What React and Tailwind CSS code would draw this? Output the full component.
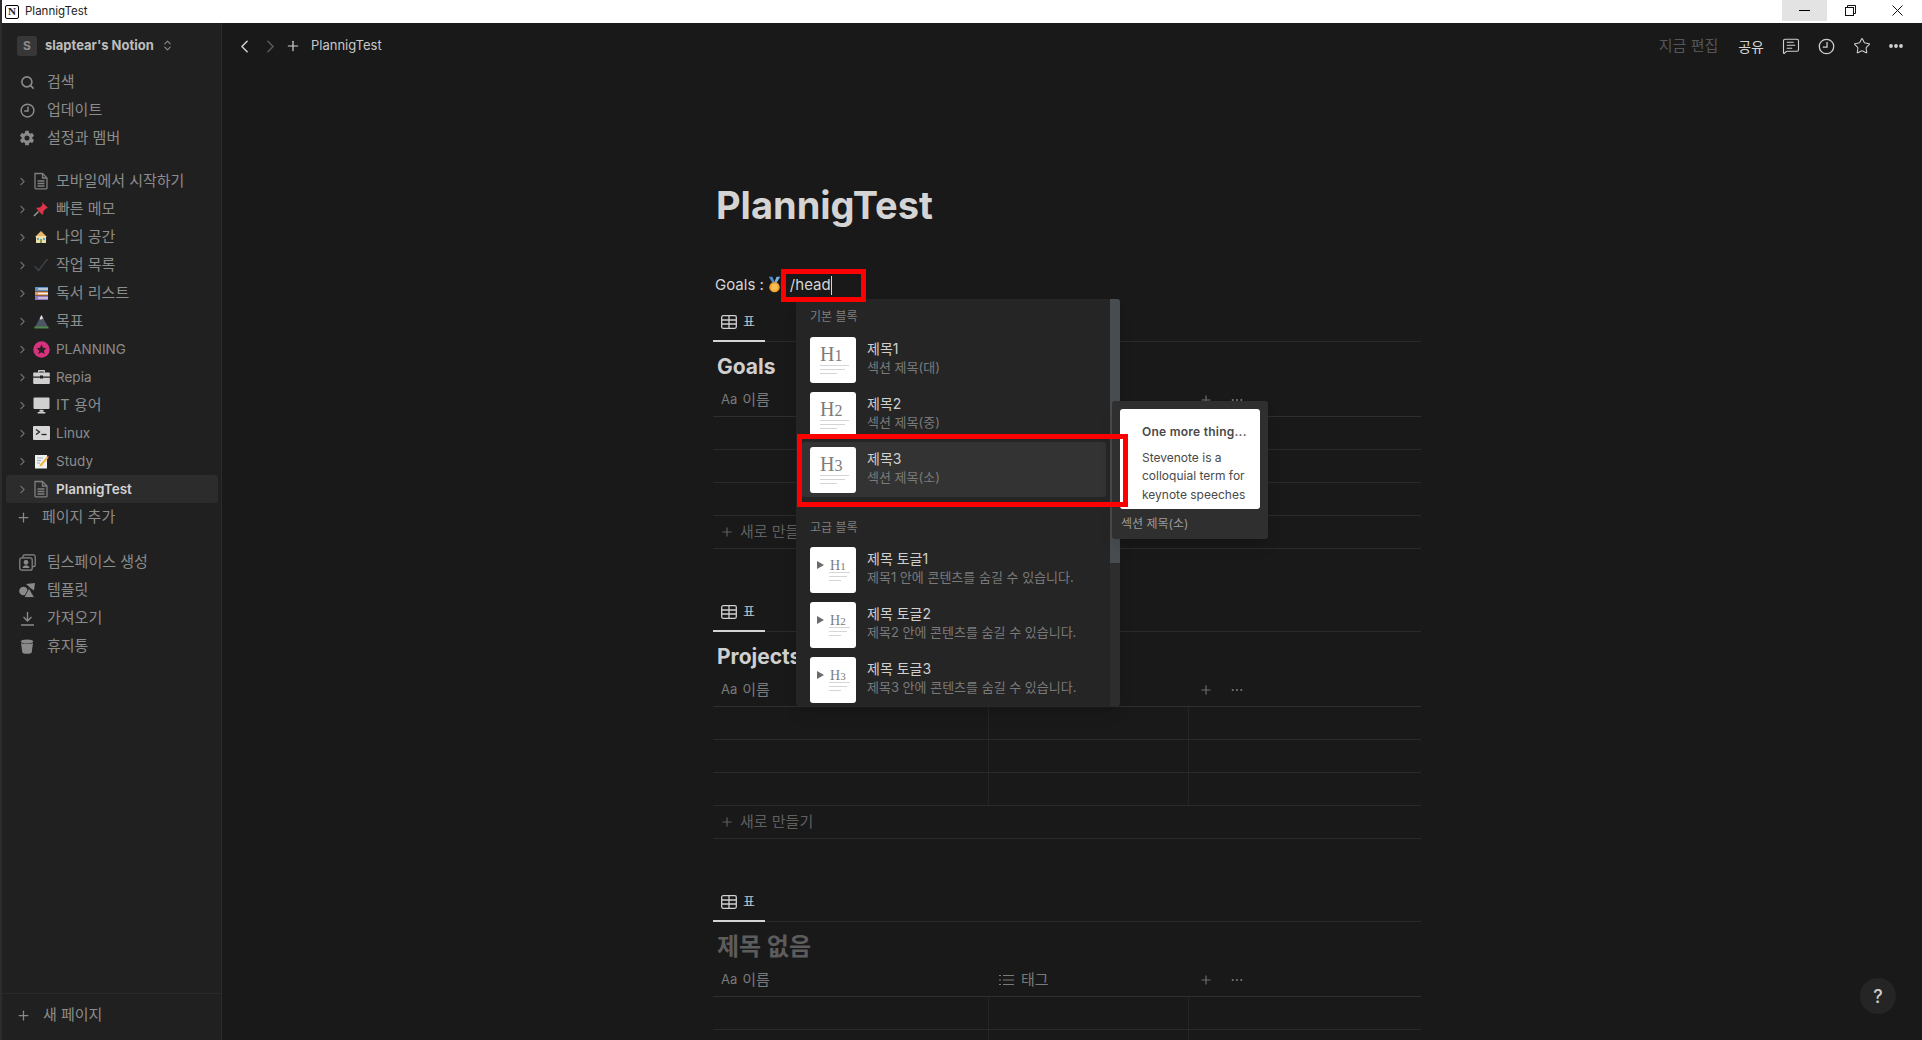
import React from "react";
import { ChevronRight, ChevronLeft, Plus, Search, ChevronsUpDown, Star, MessageSquareText } from "lucide-react";
import { IoSettingsSharp } from "react-icons/io5";

const font = { fontFamily: 'Inter, "Noto Sans CJK KR", sans-serif' };
const isKo = (s) => /[가-힣]/.test(s);

const Doc = () => (
  <svg width="16" height="18" viewBox="0 0 16 18" fill="none" stroke="#7f7f7f" strokeWidth="1.3">
    <path d="M2 1.500h7.500L14 6v10a.8.8 0 0 1-.8.8H2.800A.8.8 0 0 1 2 16z" />
    <path d="M9.500 1.500V6H14M4.500 9h7M4.500 11.500h7M4.500 14h7" />
  </svg>
);
const Pin = () => (
  <svg width="16" height="16" viewBox="0 0 16 16">
    <path d="M9 1l6 6-2 .6-2.600 2.600-.2 2.800-1 .8L3.400 7.600l.9-1 2.800-.2L9.600 3.800z" fill="#e0344a" />
    <path d="M5.500 10.500L1 15" stroke="#9a9a9a" strokeWidth="1.400" />
  </svg>
);
const House = () => (
  <svg width="14" height="14" viewBox="0 0 14 14">
    <path d="M7 1l6 6H1z" fill="#e8b667" />
    <rect x="2" y="6" width="10" height="7" fill="#f0dca8" />
    <rect x="6" y="9" width="2" height="4" fill="#7aa35c" />
    <rect x="3" y="8" width="2" height="2" fill="#6aa6c8" />
    <rect x="9" y="8" width="2" height="2" fill="#6aa6c8" />
  </svg>
);
const Check = () => (
  <svg width="16" height="16" viewBox="0 0 16 16" fill="none">
    <path d="M1.500 9l4 4.500L14.500 2" stroke="#3b4045" strokeWidth="1.600" />
  </svg>
);
const Books = () => (
  <svg width="15" height="15" viewBox="0 0 15 15">
    <rect x="1" y="1" width="13" height="4" fill="#5b8fc4" />
    <rect x="1" y="5.500" width="13" height="4" fill="#e89a5b" />
    <rect x="1" y="10" width="13" height="4" fill="#9577c4" />
    <rect x="4" y="2.300" width="10" height="1.400" fill="#dcdcdc" />
    <rect x="4" y="6.800" width="10" height="1.400" fill="#eee" />
    <rect x="4" y="11.300" width="10" height="1.400" fill="#dcdcdc" />
  </svg>
);
const Mountain = () => (
  <svg width="15" height="15" viewBox="0 0 15 15">
    <path d="M7.500 1L14 13H1z" fill="#4b5563" />
    <path d="M7.500 1L9.500 5 8 4.500 7 6 5.600 4.600z" fill="#dfe4e8" />
    <rect x="0.500" y="12.500" width="14" height="2" fill="#4f8a4a" />
  </svg>
);
const StarCircle = () => (
  <svg width="17" height="17" viewBox="0 0 17 17">
    <circle cx="8.500" cy="8.500" r="8.200" fill="#d6337e" />
    <path d="M8.500 3.600l1.500 3.200 3.400.4-2.500 2.400.7 3.400-3.100-1.700-3.100 1.700.7-3.400L3.600 7.200 7 6.800z" fill="#2a2024" />
  </svg>
);
const Briefcase = () => (
  <svg width="17" height="16" viewBox="0 0 17 16" fill="#d0d0d0">
    <path d="M6 1h5a1 1 0 0 1 1 1v1.500h-1.300V2.400H6.300v1.100H5V2a1 1 0 0 1 1-1z" />
    <path d="M1 3.500h15a.8.8 0 0 1 .8.8v3.200H.2V4.300a.8.8 0 0 1 .8-.8zM.2 8.800h16.600V14a1 1 0 0 1-1 1H1.200a1 1 0 0 1-1-1z" />
    <rect x="7" y="6.500" width="3" height="3" fill="#222" />
  </svg>
);
const Monitor = () => (
  <svg width="17" height="17" viewBox="0 0 17 17" fill="#d0d0d0">
    <rect x="0.500" y="0.500" width="16" height="11.500" rx="1" />
    <rect x="6.500" y="12.800" width="4" height="2" />
    <rect x="4.500" y="15" width="8" height="1.500" rx=".7" />
  </svg>
);
const Terminal = () => (
  <svg width="17" height="14" viewBox="0 0 17 14">
    <rect width="17" height="14" rx="1" fill="#d6d6d6" />
    <path d="M3 3.500L6.500 6 3 8.500" stroke="#222" strokeWidth="1.300" fill="none" />
    <path d="M8.500 8.500h5" stroke="#222" strokeWidth="1.300" />
  </svg>
);
const Memo = () => (
  <svg width="15" height="15" viewBox="0 0 15 15">
    <rect x="1" y="1" width="12" height="13.500" fill="#eef0f2" />
    <path d="M3 4h6M3 6.500h4M3 9h3" stroke="#8a9aa8" strokeWidth=".8" />
    <path d="M6 10.500L13 2.500l1.500 1.300L7.500 12l-2 .6z" fill="#f0b53c" />
    <path d="M13 2.500l.9-1 1 1-.9 1.300z" fill="#e0526a" />
  </svg>
);
const Medal = () => (
  <svg width="13" height="18" viewBox="0 0 15 19">
    <path d="M1 0h4l3 7H5z" fill="#4f8ec9" />
    <path d="M14 0h-4L7 7h3z" fill="#7fb2de" />
    <circle cx="7.500" cy="12" r="6" fill="#f0a32c" />
    <circle cx="7.500" cy="12" r="3.800" fill="#f7bd55" />
  </svg>
);

const ClockIcon = ({ size = 16, color = "#8a8a8a", sw = 1.600 }) => (
  <svg width={size} height={size} viewBox="0 0 16 16" fill="none" stroke={color} strokeWidth={sw}>
    <circle cx="8" cy="8" r="6.800" />
    <path d="M8.500 3.800V8.500H4.500" />
  </svg>
);
const Team = () => (
  <svg width="17" height="17" viewBox="0 0 17 17" fill="none" stroke="#8a8a8a" strokeWidth="1.200">
    <rect x="0.800" y="3.800" width="12.400" height="12.400" rx="2" />
    <path d="M4 3.500V2.500a1.700 1.700 0 0 1 1.700-1.700h9a1.700 1.700 0 0 1 1.500 1.700v8.500a1.700 1.700 0 0 1-1.700 1.700h-1" />
    <circle cx="7" cy="8.300" r="1.800" fill="#8a8a8a" />
    <path d="M3.500 14c.4-2 1.800-2.800 3.500-2.800s3.100.8 3.500 2.800z" fill="#8a8a8a" stroke="none" />
  </svg>
);
const Shapes = () => (
  <svg width="17" height="15" viewBox="0 0 17 15" fill="#8a8a8a">
    <circle cx="4.500" cy="8" r="4.300" />
    <path d="M7 1l9-1-1 7.500-3-2z" />
    <path d="M10 5l5.500 9.500H5z" stroke="#202020" strokeWidth=".8" />
  </svg>
);
const Import = () => (
  <svg width="15" height="15" viewBox="0 0 15 15" fill="none" stroke="#8a8a8a" strokeWidth="1.400">
    <path d="M7.500 1v8.500M3.500 6l4 4 4-4M1 14h13" />
  </svg>
);
const Trash = () => (
  <svg width="14" height="15" viewBox="0 0 14 15" fill="#8a8a8a">
    <path d="M1 4c1.500 1.200 10.500 1.200 12 0l-1.300 9.400c-.3 1.800-9.100 1.800-9.400 0z" />
    <ellipse cx="7" cy="2.500" rx="6.300" ry="2" />
  </svg>
);
const TableIcon = () => (
  <svg width="16" height="14" viewBox="0 0 16 14" fill="none" stroke="#d0d0d0" strokeWidth="1.300">
    <rect x="0.700" y="0.700" width="14.600" height="12.600" rx="1.500" />
    <path d="M0.700 5h14.600M0.700 9h14.600M8 .7v12.600" />
  </svg>
);
const Dots = ({ r = 1.400, color = "#7a7a7a", w = 14 }) => (
  <svg width={w} height="4" viewBox="0 0 14 4" fill={color}>
    <circle cx="2" cy="2" r={r} />
    <circle cx="7" cy="2" r={r} />
    <circle cx="12" cy="2" r={r} />
  </svg>
);

const Row = ({ icon, label }) => (
  <div className="flex h-[28px] items-center text-[15px] text-[#8c8c8c]">
    <span className="flex w-[20px] ml-[15px] justify-center">{icon}</span>
    <span className="ml-[10px]">{label}</span>
  </div>
);
const TreeRow = ({ icon, label, active }) => (
  <div className={`flex h-[28px] items-center mr-[3px] ml-[4px] rounded-[3px] ${isKo(label) ? "text-[15px]" : "text-[13.5px]"} ${active ? "bg-[#2c2c2c] text-[#d4d4d4] font-semibold" : "text-[#8c8c8c]"}`}>
    <ChevronRight size={13} color="#6e6e6e" className="ml-[10px]" />
    <span className="flex w-[20px] ml-[2px] justify-center">{icon}</span>
    <span className="ml-[5px]">{label}</span>
  </div>
);

const Sidebar = () => (
  <aside className="flex h-full w-[220px] shrink-0 flex-col border-r border-[#2a2a2a] bg-[#202020]">
    <div className="flex h-[45px] shrink-0 items-center pl-[15px] text-[13px] font-bold text-[#bdbdbd]">
      <span className="flex h-[20px] w-[20px] items-center justify-center rounded-[3px] bg-[#373737] text-[12px] text-[#8c8c8c]">S</span>
      <span className="ml-[8px]">slaptear's Notion</span>
      <ChevronsUpDown size={13} color="#8c8c8c" className="ml-[7px]" />
    </div>
    <Row icon={<Search size={15} color="#8a8a8a" strokeWidth={2.600} />} label="검색" />
    <Row icon={<ClockIcon size={15} />} label="업데이트" />
    <Row icon={<IoSettingsSharp size={16} color="#8a8a8a" />} label="설정과 멤버" />
    <div className="mt-[15px]">
      <TreeRow icon={<Doc />} label="모바일에서 시작하기" />
      <TreeRow icon={<Pin />} label="빠른 메모" />
      <TreeRow icon={<House />} label="나의 공간" />
      <TreeRow icon={<Check />} label="작업 목록" />
      <TreeRow icon={<Books />} label="독서 리스트" />
      <TreeRow icon={<Mountain />} label="목표" />
      <TreeRow icon={<StarCircle />} label="PLANNING" />
      <TreeRow icon={<Briefcase />} label="Repia" />
      <TreeRow icon={<Monitor />} label="IT 용어" />
      <TreeRow icon={<Terminal />} label="Linux" />
      <TreeRow icon={<Memo />} label="Study" />
      <TreeRow icon={<Doc />} label="PlannigTest" active />
      <div className="flex h-[28px] items-center pl-[14px] text-[15px] text-[#8c8c8c]">
        <Plus size={15} color="#8a8a8a" />
        <span className="ml-[11px]">페이지 추가</span>
      </div>
    </div>
    <div className="mt-[17px]">
      <Row icon={<Team />} label="팀스페이스 생성" />
      <Row icon={<Shapes />} label="템플릿" />
      <Row icon={<Import />} label="가져오기" />
      <Row icon={<Trash />} label="휴지통" />
    </div>
    <div className="mt-auto flex h-[47px] items-center border-t border-[#2a2a2a] pb-[3px] pl-[14px] text-[15px] text-[#8c8c8c]">
      <Plus size={15} color="#8a8a8a" />
      <span className="ml-[12px]">새 페이지</span>
    </div>
  </aside>
);

const Thumb = ({ n, toggle }) => (
  <div className="relative h-[46px] w-[46px] shrink-0 rounded-[3px] bg-white">
    {toggle && <span className="absolute left-[7px] top-[14px] h-0 w-0 border-y-[4px] border-l-[7px] border-y-transparent border-l-[#6b6b6b]" />}
    <div className={`absolute flex items-baseline leading-none text-[#7c7c7c] ${toggle ? "left-[20px] top-[12px] text-[14px]" : "left-[10px] top-[7px] text-[20px]"}`} style={{ fontFamily: '"Liberation Serif", serif' }}>
      H<span className={toggle ? "text-[11px]" : "text-[16px]"}>{n}</span>
    </div>
    <div className={`absolute flex flex-col ${toggle ? "left-[19px] top-[25px] w-[21px] gap-[3px]" : "left-[10px] top-[28px] w-[29px] gap-[3px]"}`}>
      <div className="h-px w-full bg-[#d5d5d5]" />
      <div className="h-px w-[85%] bg-[#d5d5d5]" />
      <div className="h-px w-[58%] bg-[#d5d5d5]" />
    </div>
  </div>
);
const MenuItem = ({ n, title, sub, toggle, active }) => (
  <div className={`ml-[6px] mr-[4px] flex h-[55px] items-center rounded-[3px] pl-[8px] ${active ? "bg-[#333333]" : ""}`}>
    <Thumb n={n} toggle={toggle} />
    <div className="ml-[11px] flex flex-col pb-[3px]">
      <span className="text-[14px] leading-[18px] text-[#cfcfcf]">{title}</span>
      <span className="whitespace-nowrap text-[13px] leading-[18px] text-[#7a7a7a]">{sub}</span>
    </div>
  </div>
);

const Menu = () => (
  <div className="absolute left-[796px] top-[299px] flex h-[407px] w-[324px] overflow-hidden rounded-[3px] bg-[#252525] shadow-lg">
    <div className="min-w-0 flex-1">
      <div className="flex h-[33px] items-center pl-[14px] pt-[3px] text-[12px] text-[#7f7f7f]">기본 블록</div>
      <MenuItem n="1" title="제목1" sub="섹션 제목(대)" />
      <MenuItem n="2" title="제목2" sub="섹션 제목(중)" />
      <MenuItem n="3" title="제목3" sub="섹션 제목(소)" active />
      <div className="flex h-[45px] items-center pl-[14px] pt-[16px] text-[12px] text-[#7f7f7f]">고급 블록</div>
      <MenuItem n="1" title="제목 토글1" sub="제목1 안에 콘텐츠를 숨길 수 있습니다." toggle />
      <MenuItem n="2" title="제목 토글2" sub="제목2 안에 콘텐츠를 숨길 수 있습니다." toggle />
      <MenuItem n="3" title="제목 토글3" sub="제목3 안에 콘텐츠를 숨길 수 있습니다." toggle />
    </div>
    <div className="h-full w-[10px] bg-[#2d2d2d]">
      <div className="h-[264px] w-full bg-[#474c50]" />
    </div>
  </div>
);

const Tooltip = () => (
  <div className="absolute left-[1112px] top-[401px] flex h-[138px] w-[156px] flex-col rounded-[3px] bg-[#2f2f2f] shadow-lg">
    <div className="mx-[8px] mt-[8px] h-[100px] w-[140px] rounded-[3px] bg-white pl-[22px] pt-[14px] text-[12px] leading-[18.500px] text-[#4a4a4a]">
      <div className="font-semibold tracking-[0.25px]">One more thing...</div>
      <div className="mt-[7px] whitespace-nowrap">Stevenote is a<br />colloquial term for<br />keynote speeches</div>
    </div>
    <div className="ml-[9px] mt-[6px] text-[12px] leading-[18px] text-[#9b9b9b]">섹션 제목(소)</div>
  </div>
);

const Cell = ({ w, children, line }) => (
  <div className={`flex h-full items-center ${w} ${line ? "border-r border-[#252525]" : ""}`}>{children}</div>
);

const GridRow = () => (
  <div className="flex h-[33px] border-b border-[#2a2a2a]">
    <Cell w="w-[276px]" line />
    <Cell w="w-[200px]" line />
  </div>
);

const TableBlock = ({ title, dim, tag, gapTop, cropped }) => (
  <section className={gapTop ? "mt-[44px]" : "mt-[6px]"}>
    <div className="h-[39px] border-b border-[#2a2a2a]">
      <div className="flex h-[39px] w-[52px] items-center gap-[6px] border-b-2 border-[#d4d4d4] pl-[8px] text-[13px] text-[#c8c8c8]">
        <TableIcon />
        <span>표</span>
      </div>
    </div>
    <div className={`h-[42px] pl-[4px] pt-[12px] font-bold leading-[26px] ${isKo(title) ? "text-[24px]" : "text-[21px]"} ${dim ? "text-[#5c5c5c]" : "text-[#cfcfcf]"}`}>{title}</div>
    <div className="flex h-[33px] items-center border-b border-[#2f2f2f] text-[15px] text-[#7a7a7a]">
      <Cell w="w-[276px]">
        <span className="ml-[8px] text-[13px]">Aa</span>
        <span className="ml-[5px]">이름</span>
      </Cell>
      <Cell w="w-[200px]">
        {tag && (
          <>
            <svg width="15" height="12" viewBox="0 0 15 12" className="ml-[10px]" stroke="#7a7a7a" strokeWidth="1.200" fill="none">
              <path d="M0 1.500h2M4 1.500h11M0 6h2M4 6h11M0 10.500h2M4 10.500h11" />
            </svg>
            <span className="ml-[7px]">태그</span>
          </>
        )}
      </Cell>
      <Plus size={14} color="#6e6e6e" className="ml-[10px]" />
      <span className="ml-[18px] flex"><Dots color="#7a7a7a" r={1.200} w={12} /></span>
    </div>
    <GridRow />
    <GridRow />
    {!cropped && <GridRow />}
    {!cropped && (
      <div className="flex h-[33px] items-center border-b border-[#2a2a2a] pl-[7px] text-[15px] text-[#5f5f5f]">
        <Plus size={14} color="#5f5f5f" />
        <span className="ml-[6px]">새로 만들기</span>
      </div>
    )}
  </section>
);

const TopBar = () => (
  <header className="flex h-[46px] shrink-0 items-center pl-[12px] text-[14px]">
    <ChevronLeft size={21} color="#cfcfcf" strokeWidth={1.800} />
    <ChevronRight size={21} color="#5a5a5a" strokeWidth={1.800} className="ml-[5px]" />
    <Plus size={16} color="#d4d4d4" strokeWidth={1.800} className="ml-[4px]" />
    <span className="ml-[10px] text-[13px] text-[#c8c8c8]">PlannigTest</span>
    <div className="ml-auto flex items-center pr-[17px]">
      <span className="text-[15px] text-[#555555]">지금 편집</span>
      <span className="ml-[20px] text-[#d4d4d4]">공유</span>
      <MessageSquareText size={18} color="#cfcfcf" strokeWidth={1.500} className="ml-[18px]" />
      <span className="ml-[18px] flex"><ClockIcon size={17} color="#cfcfcf" sw={1.200} /></span>
      <Star size={18} color="#cfcfcf" strokeWidth={1.400} className="ml-[18px]" />
      <span className="ml-[16px] flex"><Dots r={1.900} color="#cfcfcf" w={18} /></span>
    </div>
  </header>
);

const TitleBar = () => (
  <div className="flex h-[23px] shrink-0 items-start bg-white pr-[2px] text-[11.500px] text-[#222222]">
    <div className="flex h-[23px] items-center">
      <span className="ml-[3px] flex h-[14px] w-[14px] items-center justify-center rounded-[2px] border border-black bg-white text-[11px] font-bold leading-none" style={{ fontFamily: '"Liberation Serif", serif' }}>N</span>
      <span className="ml-[6px]">PlannigTest</span>
    </div>
    <div className="ml-auto flex h-[21px]">
      <div className="flex w-[45px] items-center justify-center bg-[#e3e3e3]">
        <span className="h-px w-[11px] bg-black" />
      </div>
      <div className="flex w-[47px] items-center justify-center">
        <svg width="11" height="11" viewBox="0 0 11 11" fill="none" stroke="#111" strokeWidth="1">
          <rect x=".5" y="2.500" width="8" height="8" />
          <path d="M2.500 2.500V.5h8v8h-2" />
        </svg>
      </div>
      <div className="flex w-[46px] items-center justify-center">
        <svg width="11" height="11" viewBox="0 0 11 11" fill="none" stroke="#111" strokeWidth="1">
          <path d="M.5.5l10 10M10.500.5l-10 10" />
        </svg>
      </div>
    </div>
  </div>
);

export default function App() {
  return (
    <div className="relative flex h-screen w-full overflow-hidden bg-[#191919]" style={font}>
      <div className="h-full w-[2px] shrink-0 bg-[#2a2d30]" />
      <div className="flex min-w-0 flex-1 flex-col">
        <TitleBar />
        <div className="flex min-h-0 flex-1">
          <Sidebar />
          <main className="flex min-w-0 flex-1 flex-col">
            <TopBar />
            <div className="ml-[491px] w-[708px]">
              <h1 className="pl-[3px] pt-[112px] text-[38px] font-bold leading-[48px] text-[#d4d4d4]">PlannigTest</h1>
              <div className="mt-[44px] flex h-[24px] items-center pl-[2px] text-[15px] text-[#d4d4d4]">
                <span>Goals :</span>
                <span className="ml-[4px] flex"><Medal /></span>
                <span className="ml-[9px]">/head</span>
                <span className="h-[19px] w-px bg-[#d4d4d4]" />
              </div>
              <TableBlock title="Goals" />
              <TableBlock title="Projects" gapTop />
              <TableBlock title="제목 없음" dim tag gapTop cropped />
            </div>
          </main>
        </div>
      </div>
      <Menu />
      <Tooltip />
      <div className="absolute left-[781px] top-[269px] h-[33px] w-[85px] border-[5px] border-[#ff0000]" />
      <div className="absolute left-[797px] top-[434px] h-[73px] w-[331px] border-[5px] border-[#ff0000]" />
      <div className="absolute left-[1860px] top-[978px] flex h-[36px] w-[36px] items-center justify-center rounded-full bg-[#252525] text-[18px] font-medium text-[#cfcfcf]">?</div>
    </div>
  );
}
